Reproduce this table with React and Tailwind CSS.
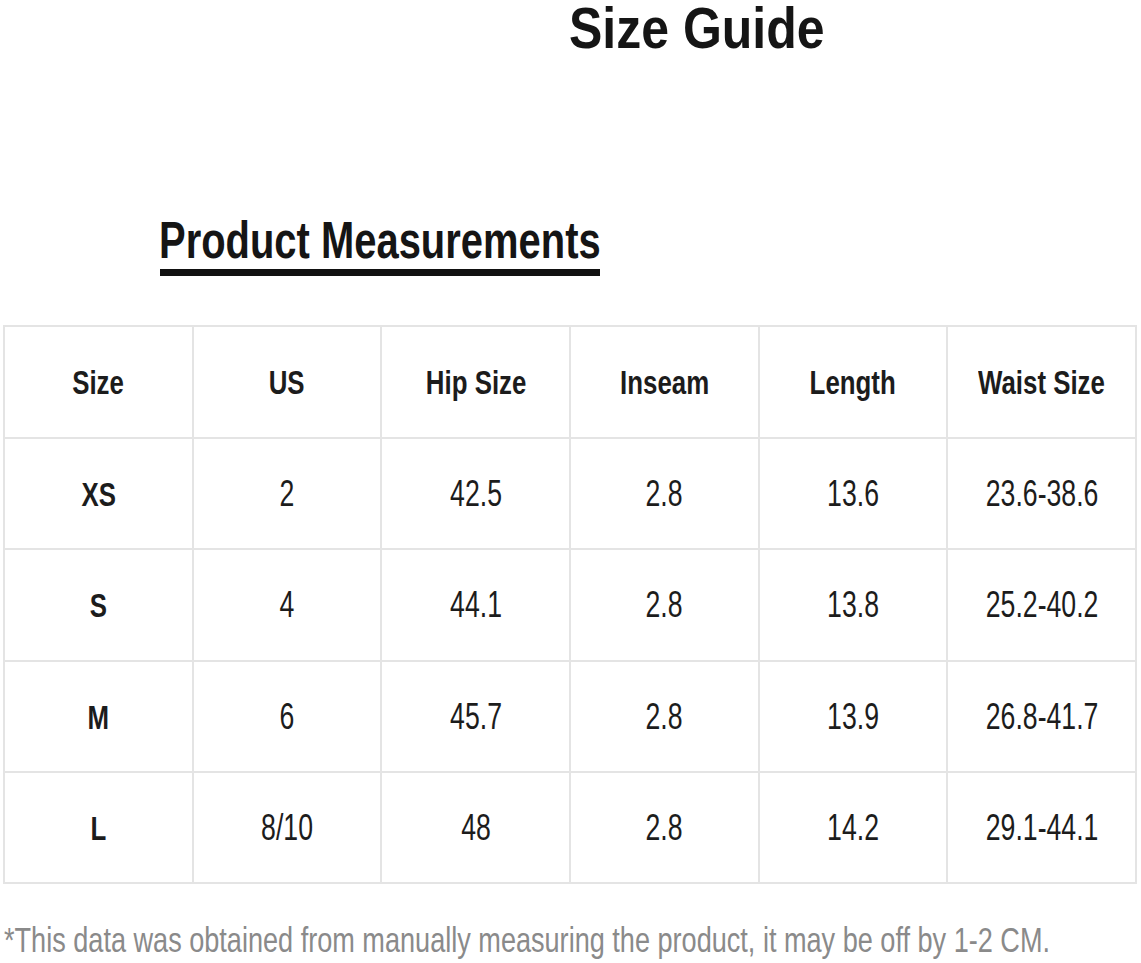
import React from 'react';

const headers = ['Size', 'US', 'Hip Size', 'Inseam', 'Length', 'Waist Size'];

const rows = [
    ['XS', '2', '42.5', '2.8', '13.6', '23.6-38.6'],
    ['S', '4', '44.1', '2.8', '13.8', '25.2-40.2'],
    ['M', '6', '45.7', '2.8', '13.9', '26.8-41.7'],
    ['L', '8/10', '48', '2.8', '14.2', '29.1-44.1'],
];

const rowHeights = ['h-[112px]', 'h-[111px]', 'h-[112px]', 'h-[111px]', 'h-[111px]'];

function Cell({ children, bold, height }) {
    return (
        <div className={`${height} flex items-center justify-center border-r-2 border-b-2 border-[#e4e4e4]`}>
            <span
                className={`inline-block origin-center whitespace-nowrap leading-none text-[#1c1c1c] ${
                    bold ? 'scale-x-[0.76] font-bold text-[34px]' : 'scale-x-[0.74] font-normal text-[36px]'
                }`}
            >
                {children}
            </span>
        </div>
    );
}

function App() {
    return (
        <div className="w-[1141px] h-[963px] bg-white overflow-hidden" style={{ fontFamily: '"Liberation Sans", Arial, sans-serif' }}>
            {/* title */}
            <div className="pl-[569px] h-[57px]">
                <h1 className="inline-block origin-left scale-x-[0.877] whitespace-nowrap text-[57px] leading-none font-bold text-[#151515]">
                    Size Guide
                </h1>
            </div>

            {/* section heading */}
            <div className="mt-[157px] pl-[159px]">
                <div className="h-[52px]">
                    <h2 className="inline-block origin-left scale-x-[0.768] whitespace-nowrap text-[52px] leading-none font-bold text-[#151515]">
                        Product Measurements
                    </h2>
                </div>
                <div className="mt-[3px] ml-[1px] w-[440px] h-[7px] bg-[#111]" />
            </div>

            {/* table */}
            <div className="mt-[49px] ml-[3px] w-[1134px] grid grid-cols-6 border-l-2 border-t-2 border-[#e4e4e4]">
                {headers.map(h => (
                    <Cell key={h} bold height={rowHeights[0]}>{h}</Cell>
                ))}
                {rows.map((row, i) =>
                    row.map((val, j) => (
                        <Cell key={`${i}-${j}`} bold={j === 0} height={rowHeights[i + 1]}>
                            {val}
                        </Cell>
                    ))
                )}
            </div>

            {/* note */}
            <div className="mt-[38px] pl-[4px]">
                <p className="inline-block origin-left scale-x-[0.774] whitespace-nowrap text-[35px] leading-none text-[#8a8a8a]">
                    *This data was obtained from manually measuring the product, it may be off by 1-2 CM.
                </p>
            </div>
        </div>
    );
}

export default App;
